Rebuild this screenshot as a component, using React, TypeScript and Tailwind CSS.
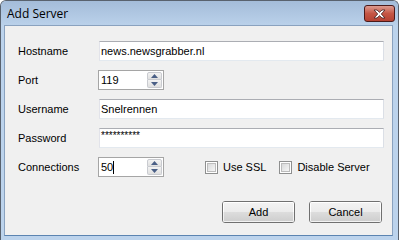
import type { ReactNode } from "react";

const ui = "font-['Liberation_Sans',Arial,sans-serif] text-[11px] text-black";

function TextBox({ children, width }: { children?: ReactNode; width: string }) {
  return (
    <div
      className={`${width} h-[20px] bg-white border border-t-[#abadb3] border-l-[#e2e3ea] border-r-[#dbdfe6] border-b-[#e3e9ef] flex items-center pl-[1px] leading-none`}
    >
      {children}
    </div>
  );
}

function Spinner({ value, caret }: { value: string; caret?: boolean }) {
  return (
    <div className="-ml-px w-[66px] h-[20px] bg-white border border-[#a5a5a5] flex items-center pl-[2px] pr-[1px]">
      <div className="flex-1 flex items-center leading-none">
        <span>{value}</span>
        {caret && <span className="w-[1px] h-[13px] bg-black" />}
      </div>
      <div className="flex flex-col w-[15px]">
        <div className="h-[8px] flex items-center justify-center bg-gradient-to-b from-[#f3f3f3] to-[#e0e0e0] border border-[#c9cbd0] rounded-t-[2px]">
          <svg width="7" height="4" viewBox="0 0 7 4">
            <path d="M3.5 0 L7 4 L0 4 Z" fill="#4a5f86" />
          </svg>
        </div>
        <div className="h-[8px] flex items-center justify-center bg-gradient-to-b from-[#f3f3f3] to-[#e0e0e0] border border-t-0 border-[#c9cbd0] rounded-b-[2px]">
          <svg width="7" height="4" viewBox="0 0 7 4">
            <path d="M0 0 L7 0 L3.5 4 Z" fill="#4a5f86" />
          </svg>
        </div>
      </div>
    </div>
  );
}

function CheckBox({ label }: { label: string }) {
  return (
    <div className="flex items-center gap-[5px]">
      <div className="w-[13px] h-[13px] border border-[#8e8f8f] bg-white p-[1px]">
        <div className="w-full h-full bg-gradient-to-br from-[#d9dadb] to-[#f6f6f6] border border-[#bcbcbc]" />
      </div>
      <span>{label}</span>
    </div>
  );
}

function Button({ children }: { children: ReactNode }) {
  return (
    <div className="w-[73px] h-[22px] rounded-[3px] border border-[#707070] flex flex-col overflow-hidden relative">
      <div className="flex-1 bg-gradient-to-b from-[#f2f2f2] to-[#ebebeb] border-t border-l border-r border-white" />
      <div className="flex-1 bg-gradient-to-b from-[#dddddd] to-[#cfcfcf] border-l border-r border-b border-[#f2f2f2]" />
      <div className="absolute inset-0 flex items-center justify-center leading-none">{children}</div>
    </div>
  );
}

function Row({ label, children }: { label: string; children: ReactNode }) {
  return (
    <div className="flex items-center h-[20px]">
      <span className="w-[81px]">{label}</span>
      {children}
    </div>
  );
}

export default function App() {
  return (
    <div className={`${ui} w-[399px] h-[240px] flex flex-col bg-[#bcd3ec] border-l border-t border-r border-[#59626e] rounded-t-[6px] overflow-hidden`}>
      <div className="h-[24px] shrink-0 flex items-start bg-gradient-to-b from-[#a4bcd9] to-[#bad1ea] pl-[6px] pr-[3px]">
        <span className="mt-[6px] font-['Open_Sans',Arial,sans-serif] text-[12px] leading-[14px] text-black">Add Server</span>
        <div className="ml-auto mt-[4px] w-[31px] h-[17px] rounded-[3px] border border-[#4b1a1a] bg-gradient-to-b from-[#dc9a90] via-[#c55645] to-[#b54233] flex items-center justify-center">
          <svg width="13" height="10" viewBox="0 0 13 10">
            <path
              d="M1 1 L4 1 L6.5 3.3 L9 1 L12 1 L8.3 5 L12 9 L9 9 L6.5 6.7 L4 9 L1 9 L4.7 5 Z"
              fill="#ffffff"
              stroke="#4e2c2c"
              strokeWidth="0.9"
              strokeLinejoin="round"
            />
          </svg>
        </div>
      </div>
      <div className="flex-1 ml-[3px] mr-[5px] mb-[4px] bg-[#f0f0f0] border border-[#8aa2bf] border-b-[#5b84b1] flex flex-col pt-[15px] pl-[13px]">
        <div className="flex flex-col gap-[9px]">
          <Row label="Hostname">
            <TextBox width="w-[285px]">news.newsgrabber.nl</TextBox>
          </Row>
          <Row label="Port">
            <Spinner value="119" />
          </Row>
          <Row label="Username">
            <TextBox width="w-[285px]">Snelrennen</TextBox>
          </Row>
          <Row label="Password">
            <TextBox width="w-[285px]">
              <span className="text-[10px] -mt-[5px]">**********</span>
            </TextBox>
          </Row>
          <Row label="Connections">
            <Spinner value="50" caret />
            <div className="ml-[41px] flex items-center gap-[13px]">
              <CheckBox label="Use SSL" />
              <CheckBox label="Disable Server" />
            </div>
          </Row>
        </div>
        <div className="flex justify-end gap-[14px] mt-[24px] pr-[10px]">
          <Button>Add</Button>
          <Button>Cancel</Button>
        </div>
      </div>
    </div>
  );
}
